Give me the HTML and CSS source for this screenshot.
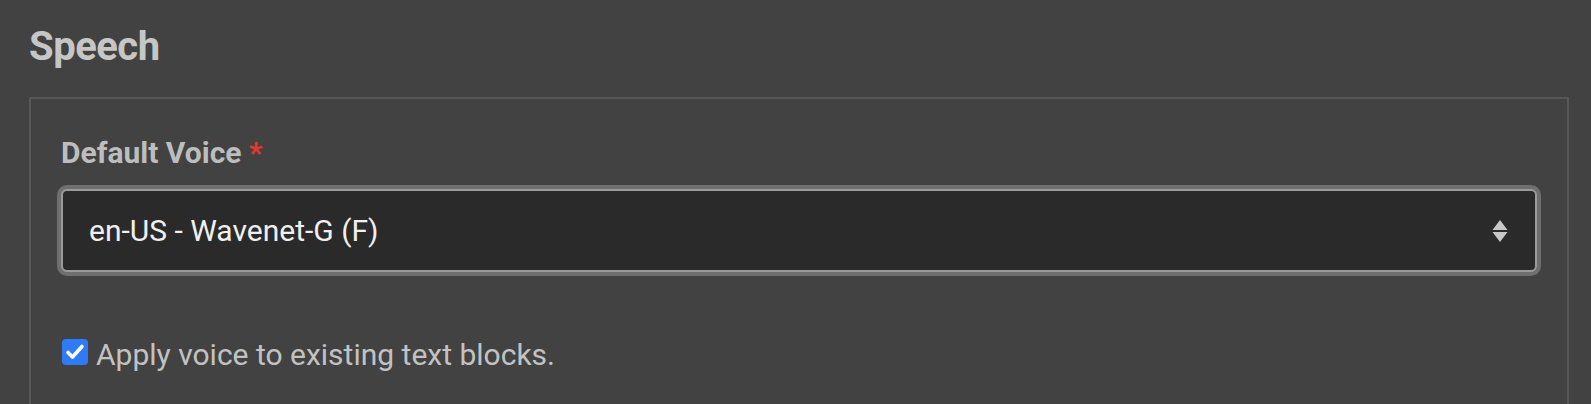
FILE: index.html
```html
<!DOCTYPE html>
<html lang="en">
<head>
    <meta charset="UTF-8">
    <meta name="viewport" content="width=device-width, initial-scale=1.0">
    <title>Speech Settings</title>
    <link rel="stylesheet" href="styles.css">
</head>
<body>
    <div class="page">
        <h1 class="section-title">Speech</h1>
        <div class="panel">
            <div class="field-label">Default Voice <span class="required">*</span></div>
            <div class="select-box">
                <span class="select-value">en-US - Wavenet-G (F)</span>
                <svg class="select-arrows" width="16" height="22" viewBox="0 0 16 22">
                    <path d="M8 0 L15.5 10 L0.5 10 Z" fill="#c8c8c8"/>
                    <path d="M0.5 12 L15.5 12 L8 22 Z" fill="#c8c8c8"/>
                </svg>
            </div>
            <label class="check-row">
                <span class="check-box">
                    <svg width="26" height="26" viewBox="0 0 26 26">
                        <path d="M6 13.5 L10.5 18 L20 7.5" fill="none" stroke="#fff" stroke-width="3.6" stroke-linecap="round" stroke-linejoin="round"/>
                    </svg>
                </span>
                <span class="check-text">Apply voice to existing text blocks.</span>
            </label>
        </div>
    </div>
</body>
</html>
```

FILE: styles.css
```css
body {
    margin: 0;
    background-color: #424242;
    font-family: Roboto, "Liberation Sans", sans-serif;
    height: 404px;
    overflow: hidden;
}
.page {
    padding: 22px 22px 0 29px;
}
.section-title {
    margin: 0 0 25px 0;
    font-size: 40px;
    line-height: 50px;
    font-weight: 700;
    letter-spacing: -0.5px;
    color: #c6c6c6;
}
.panel {
    border: 2px solid #575757;
    border-bottom: none;
    padding: 37px 30px 60px 30px;
}
.field-label {
    font-size: 30px;
    line-height: 34px;
    font-weight: 700;
    color: #bdbdbd;
}
.required {
    color: #e5392f;
}
.select-box {
    margin-top: 19px;
    height: 83px;
    box-sizing: border-box;
    display: flex;
    align-items: center;
    justify-content: space-between;
    padding: 0 27px 0 26px;
    background-color: #2a2a2a;
    border: 2px solid #9b9b9b;
    border-radius: 6px;
    box-shadow: 0 0 0 4px #6f6f6f;
}
.select-value {
    font-size: 30px;
    color: #f0f0f0;
}
.select-arrows {
    display: block;
}
.check-row {
    margin-top: 65px;
    display: flex;
    align-items: flex-start;
    gap: 8px;
}
.check-box {
    margin: 2px 0 0 1px;
    width: 26px;
    height: 26px;
    border-radius: 4px;
    background-color: #2f7bf5;
    flex-shrink: 0;
}
.check-box svg {
    display: block;
}
.check-text {
    font-size: 30px;
    line-height: 36px;
    color: #c2c2c2;
}
```
